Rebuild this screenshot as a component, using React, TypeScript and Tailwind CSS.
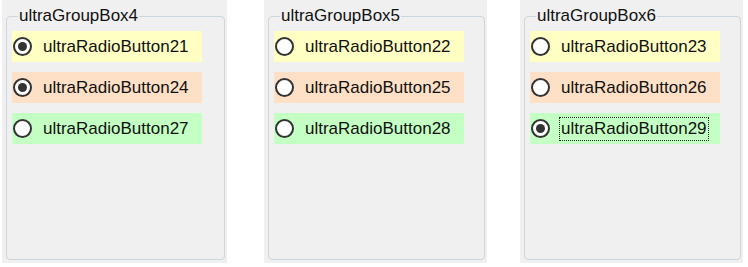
type Item = { label: string; bg: string; checked?: boolean; focused?: boolean };

const groups: { title: string; width: string; items: Item[] }[] = [
  {
    title: "ultraGroupBox4",
    width: "w-[225px]",
    items: [
      { label: "ultraRadioButton21", bg: "bg-[#ffffc4]", checked: true },
      { label: "ultraRadioButton24", bg: "bg-[#fde0c6]", checked: true },
      { label: "ultraRadioButton27", bg: "bg-[#c4ffc4]" },
    ],
  },
  {
    title: "ultraGroupBox5",
    width: "w-[223px]",
    items: [
      { label: "ultraRadioButton22", bg: "bg-[#ffffc4]" },
      { label: "ultraRadioButton25", bg: "bg-[#fde0c6]" },
      { label: "ultraRadioButton28", bg: "bg-[#c4ffc4]" },
    ],
  },
  {
    title: "ultraGroupBox6",
    width: "w-[223px]",
    items: [
      { label: "ultraRadioButton23", bg: "bg-[#ffffc4]" },
      { label: "ultraRadioButton26", bg: "bg-[#fde0c6]" },
      { label: "ultraRadioButton29", bg: "bg-[#c4ffc4]", checked: true, focused: true },
    ],
  },
];

const Radio = ({ checked }: { checked?: boolean }) => (
  <span className="ml-[1px] flex h-[19px] w-[19px] shrink-0 items-center justify-center rounded-full border-2 border-[#333] bg-white">
    {checked && <span className="h-[9px] w-[9px] rounded-full bg-[#333]" />}
  </span>
);

const GroupBox = ({ title, width, items }: { title: string; width: string; items: Item[] }) => (
  <div className={`h-[263px] ${width} bg-[#f0f0f0] pl-[4px] pr-[2px] pt-[6px] pb-[3px]`}>
    <fieldset className="h-full rounded-[4px] border border-[#cdd6dc]">
      <legend className="ml-[11px] px-[1px] text-[17px] leading-[20px] text-[#111]">{title}</legend>
      <div className="mt-[5px] flex flex-col gap-[10px]">
        {items.map((it) => (
          <div key={it.label} className={`ml-[5px] flex h-[31px] w-[190px] items-center ${it.bg}`}>
            <Radio checked={it.checked} />
            {it.focused ? (
              <span className="ml-[9px] border border-dotted border-[#222] px-[1px] leading-[22px]">{it.label}</span>
            ) : (
              <span className="ml-[11px] leading-[22px]">{it.label}</span>
            )}
          </div>
        ))}
      </div>
    </fieldset>
  </div>
);

export default function App() {
  return (
    <div
      className="flex h-[267px] w-[748px] bg-white pl-[2px] text-[17px] text-[#111]"
      style={{ fontFamily: '"Liberation Sans", Arial, sans-serif' }}
    >
      <GroupBox {...groups[0]} />
      <div className="ml-[37px] flex gap-[33px]">
        <GroupBox {...groups[1]} />
        <GroupBox {...groups[2]} />
      </div>
    </div>
  );
}
